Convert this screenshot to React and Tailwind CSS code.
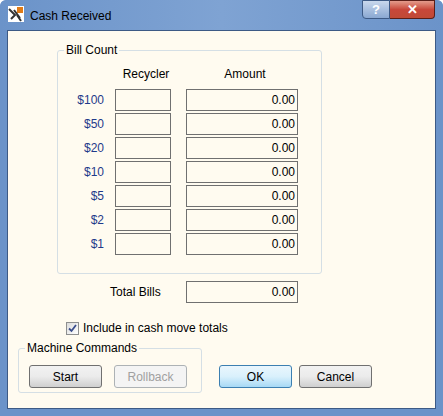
export default function App() {
  const rows = ["$100", "$50", "$20", "$10", "$5", "$2", "$1"];
  const font = { fontFamily: '"Liberation Sans", Arial, sans-serif' };
  const btn = "w-[73px] h-[23px] rounded-[3px] border text-[12px] flex items-center justify-center";
  return (
    <div style={font} className="w-[443px] h-[416px] bg-[#6b93c9] rounded-t-[6px] flex flex-col px-[7px] pb-[7px] text-[12px] text-black overflow-hidden">
      <div className="h-[30px] flex items-start relative bg-gradient-to-r from-[#6b93c9] via-[#7fa3d3] to-[#6b93c9] -mx-[7px] px-[8px] rounded-t-[6px]">
        <svg width="16" height="16" viewBox="0 0 16 16" className="mt-[6px]">
          <rect width="16" height="16" fill="#fff" />
          <rect x="9" y="1" width="6" height="6" fill="#e07b16" />
          <path d="M1 3 L7 9 L3 13 M6 4 L12 12 M9 9 L13 15" stroke="#333" strokeWidth="2" fill="none" />
        </svg>
        <span className="ml-[6px] mt-[7px] text-[12px]">Cash Received</span>
        <div className="absolute right-[8px] top-0 flex">
          <div className="w-[28px] h-[19px] border border-[#3d5a85] rounded-bl-[4px] bg-gradient-to-b from-[#c9d8ed] to-[#8aa8d2] text-white font-bold text-[13px] flex items-center justify-center">?</div>
          <div className="w-[45px] h-[19px] border border-l-0 border-[#5a1e18] rounded-br-[4px] bg-gradient-to-b from-[#e39b8c] via-[#c8473a] to-[#c04a36] text-white font-bold text-[13px] flex items-center justify-center">✕</div>
        </div>
      </div>
      <div className="flex-1 bg-[#fffbf0] border border-[#3d5a85] relative">
        <div className="ml-[49px] mt-[19px] w-[265px] h-[224px] border border-[#d5dfe5] rounded-[3px] relative">
          <span className="absolute -top-[8px] left-[6px] bg-[#fffbf0] px-[2px] leading-[14px]">Bill Count</span>
          <div className="flex mt-[16px] leading-[14px]">
            <span className="ml-[60px] w-[56px] text-center">Recycler</span>
            <span className="ml-[15px] w-[112px] text-center">Amount</span>
          </div>
          <div className="mt-[8px] flex flex-col gap-[2px]">
            {rows.map((r) => (
              <div key={r} className="flex items-center h-[22px]">
                <span className="w-[46px] text-right text-[#1f3a8a]">{r}</span>
                <div className="ml-[11px] w-[56px] h-[22px] border border-[#707070] bg-[#fffbf0]" />
                <div className="ml-[15px] w-[112px] h-[22px] border border-[#707070] bg-[#fffbf0] text-right pr-[2px] leading-[20px]">0.00</div>
              </div>
            ))}
          </div>
        </div>
        <div className="flex items-center mt-[7px] h-[22px]">
          <span className="ml-[102px] w-[56px]">Total Bills</span>
          <div className="ml-[20px] w-[112px] h-[22px] border border-[#707070] text-right pr-[2px] leading-[20px]">0.00</div>
        </div>
        <div className="flex items-center mt-[16px] ml-[58px]">
          <div className="w-[13px] h-[13px] border border-[#8e8f8f] bg-gradient-to-br from-[#dcdcdc] to-[#fff] flex items-center justify-center">
            <svg width="9" height="9" viewBox="0 0 9 9"><path d="M1 4.5 L3.5 7 L8 1" stroke="#3b4e8c" strokeWidth="1.8" fill="none" /></svg>
          </div>
          <span className="ml-[4px]">Include in cash move totals</span>
        </div>
        <div className="flex items-end mt-[11px]">
          <div className="ml-[10px] w-[184px] h-[45px] border border-[#d5dfe5] rounded-[3px] relative flex items-start gap-[12px] pl-[10px] pt-[16px]">
            <span className="absolute -top-[8px] left-[6px] bg-[#fffbf0] px-[2px] leading-[14px]">Machine Commands</span>
            <div className={`${btn} border-[#707070] bg-gradient-to-b from-[#f2f2f2] via-[#ebebeb] to-[#cfcfcf]`}>Start</div>
            <div className={`${btn} border-[#adb2b5] bg-[#f4f4f4] text-[#a0a0a0]`}>Rollback</div>
          </div>
          <div className="flex gap-[7px] ml-[17px] mb-[5px]">
            <div className={`${btn} border-[#3c7fb1] bg-gradient-to-b from-[#eaf6fd] via-[#d9f0fc] to-[#a7d9f5]`}>OK</div>
            <div className={`${btn} border-[#707070] bg-gradient-to-b from-[#f2f2f2] via-[#ebebeb] to-[#cfcfcf]`}>Cancel</div>
          </div>
        </div>
      </div>
    </div>
  );
}
